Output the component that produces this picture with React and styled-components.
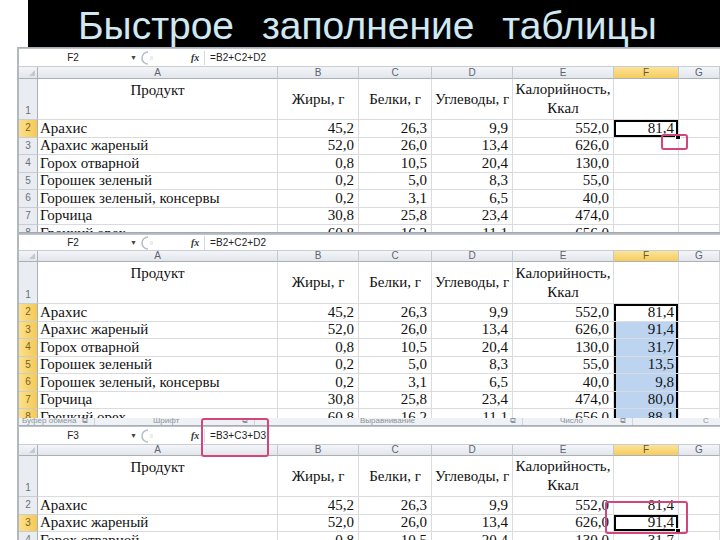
import React from 'react';
import styled, { createGlobalStyle, css } from 'styled-components';

const Global = createGlobalStyle`
  html, body { margin: 0; padding: 0; background: #fff; }
  body { width: 720px; height: 540px; overflow: hidden; font-family: "Liberation Sans", Arial, sans-serif; }
  * { box-sizing: border-box; }
`;

const Slide = styled.div`
  width: 720px;
  height: 540px;
  display: flex;
  flex-direction: column;
  background: #fff;
  overflow: hidden;
`;

const TitleBar = styled.header`
  height: 47px;
  margin-left: 28px;
  background: #000;
  display: flex;
  align-items: center;
  padding-left: 50px;
  flex-shrink: 0;
`;

const Title = styled.h1`
  margin: 0;
  padding-top: 3px;
  font: 400 39px/1 "Liberation Sans", Arial, sans-serif;
  color: #cfe8f2;
  word-spacing: 17px;
  white-space: nowrap;
`;

const Stack = styled.div`
  display: flex;
  flex-direction: column;
  margin-left: 17px;
`;

const Panel = styled.section`
  position: relative;
  height: ${p => p.$h}px;
  overflow: hidden;
  border-left: 2px solid #b3b8bf;
  background: #fff;
  flex-shrink: 0;
`;

const RibbonLabels = styled.div`
  height: 7px;
  display: flex;
  align-items: flex-end;
  overflow: hidden;
  background: #eef1f5;
  color: #8d939b;
  font: 8px/9px "Liberation Sans", Arial, sans-serif;
`;

const RibbonGroup = styled.div`
  width: ${p => p.$w}px;
  flex-shrink: 0;
  display: flex;
  justify-content: space-between;
  gap: 4px;
  padding: 0 6px 0 ${p => p.$pad}px;
  border-right: 1px solid #cfd4da;
  white-space: nowrap;
`;

const FrameLine = styled.div`
  height: ${p => p.$h}px;
  background: linear-gradient(#9da3ab, #c8cdd3);
  flex-shrink: 0;
`;

const FormulaBar = styled.div`
  height: ${p => p.$h}px;
  display: flex;
  align-items: center;
  background: #fff;
  font: 10px/1 "Liberation Sans", Arial, sans-serif;
  color: #222;
  border-bottom: 1px solid #c9ced4;
`;

const NameBox = styled.div`
  width: 108px;
  text-align: center;
`;

const DropArrow = styled.span`
  margin-left: 3px;
  width: 9px;
  font-size: 7px;
  color: #444;
`;

const RoundBtn = styled.span`
  margin-left: 2px;
  width: 16px;
  height: 14px;
  display: flex;
  align-items: center;
`;

const Fx = styled.span`
  margin-left: 34px;
  width: 10px;
  font: italic bold 10px/1 "Liberation Serif", serif;
  color: #333;
`;

const FormulaText = styled.div`
  margin-left: 3px;
  padding-left: 5px;
  border-left: 1px solid #d5d9de;
  height: 14px;
  display: flex;
  align-items: center;
  letter-spacing: 0.1px;
`;

const Sheet = styled.div`
  display: grid;
  grid-template-columns: 19px 240px 81px 73px 81px 101px 65px 1fr;
  grid-template-rows: ${p => p.$hdr}px ${p => p.$row1}px;
  grid-auto-rows: 17.5px;
`;

const HeadBase = css`
  font: 10px/1 "Liberation Sans", Arial, sans-serif;
  color: #5d6470;
  display: flex;
  justify-content: center;
  overflow: hidden;
`;

const Corner = styled.div`
  ${HeadBase};
  background: linear-gradient(#f3f5f8, #e2e6eb);
  border-right: 1px solid #a9b0b9;
  border-bottom: 1px solid #a9b0b9;
  align-items: flex-end;
  justify-content: flex-end;
  padding: 0 2px 2px 0;
`;

const ColHead = styled.div`
  ${HeadBase};
  align-items: center;
  background: ${p => (p.$sel ? 'linear-gradient(#fbe39a, #f6cd5c)' : 'linear-gradient(#f3f5f8, #e2e6eb)')};
  border-right: 1px solid #c3c9d0;
  border-bottom: 1px solid #a9b0b9;
  color: ${p => (p.$sel ? '#6a5a2a' : '#5d6470')};
`;

const RowHead = styled.div`
  ${HeadBase};
  align-items: ${p => (p.$bottom ? 'flex-end' : 'center')};
  padding-bottom: ${p => (p.$bottom ? '3px' : '0')};
  background: ${p => (p.$sel ? 'linear-gradient(90deg, #fbe08c, #f5c954)' : '#e9ecf0')};
  border-right: 1px solid #a9b0b9;
  border-bottom: 1px solid #c8cdd4;
  color: ${p => (p.$sel ? '#7a6028' : '#6a7079')};
`;

const selShadow = p => {
  if (!p.$sel) return 'none';
  const parts = ['inset 2px 0 0 #000', 'inset -2px 0 0 #000'];
  if (p.$sel.top) parts.push('inset 0 2px 0 #000');
  if (p.$sel.bottom) parts.push('inset 0 -2px 0 #000');
  return parts.join(', ');
};

const Cell = styled.div`
  position: relative;
  display: flex;
  align-items: ${p => p.$valign || 'center'};
  justify-content: ${p => p.$align || 'flex-start'};
  text-align: center;
  padding: ${p => (p.$align === 'flex-end' ? '0 4px 0 2px' : '0 2px')};
  font: 15px/19px "Liberation Serif", "Times New Roman", serif;
  color: #111;
  white-space: nowrap;
  background: ${p => (p.$fill ? '#bcd4f0' : '#fff')};
  border-right: 1px solid #d9dbde;
  border-bottom: 1px solid #d9dbde;
  box-shadow: ${selShadow};
`;

const TopText = styled.span`
  padding-top: 2px;
`;

const FillHandle = styled.span`
  position: absolute;
  right: -3px;
  bottom: -3px;
  width: 6px;
  height: 6px;
  background: #000;
  border: 1px solid #fff;
  z-index: 3;
`;

const Annot = styled.div`
  position: absolute;
  left: ${p => p.$x}px;
  top: ${p => p.$y}px;
  width: ${p => p.$w}px;
  height: ${p => p.$h}px;
  border: 2px solid #d2467b;
  border-radius: 3px;
  z-index: 5;
  pointer-events: none;
`;

const DATA = [
  ['Арахис', '45,2', '26,3', '9,9', '552,0', '81,4'],
  ['Арахис жареный', '52,0', '26,0', '13,4', '626,0', '91,4'],
  ['Горох отварной', '0,8', '10,5', '20,4', '130,0', '31,7'],
  ['Горошек зеленый', '0,2', '5,0', '8,3', '55,0', '13,5'],
  ['Горошек зеленый, консервы', '0,2', '3,1', '6,5', '40,0', '9,8'],
  ['Горчица', '30,8', '25,8', '23,4', '474,0', '80,0'],
  ['Грецкий орех', '60,8', '16,2', '11,1', '656,0', '88,1'],
];

const LETTERS = ['A', 'B', 'C', 'D', 'E', 'F', 'G'];

function CornerMark() {
  return (
    <svg width="6" height="6" viewBox="0 0 6 6">
      <path d="M6 0 L6 6 L0 6 Z" fill="#c4c9cf" />
    </svg>
  );
}

function RoundGlyph() {
  return (
    <svg width="16" height="14" viewBox="0 0 16 14">
      <path d="M7 1 A6 6 0 0 0 7 13" fill="none" stroke="#b9bfc7" strokeWidth="1.6" />
      <path d="M9 6 H12 M9 8 H12" stroke="#cdd1d6" strokeWidth="0.8" />
    </svg>
  );
}

function SheetPanel({ cfg }) {
  const { h, strip, topH, fbH, hdrH, row1H, name, formula, sel, blue, filled, handleRow, annots } = cfg;
  return (
    <Panel $h={h}>
      {strip && (
        <RibbonLabels>
          <RibbonGroup $w={76} $pad={3}><span>Буфер обмена</span><span>⧉</span></RibbonGroup>
          <RibbonGroup $w={160} $pad={58}><span>Шрифт</span><span>⧉</span></RibbonGroup>
          <RibbonGroup $w={268} $pad={105}><span>Выравнивание</span><span>⧉</span></RibbonGroup>
          <RibbonGroup $w={110} $pad={37}><span>Число</span><span>⧉</span></RibbonGroup>
          <RibbonGroup $w={90} $pad={70}><span>С</span></RibbonGroup>
        </RibbonLabels>
      )}
      <FrameLine $h={topH} />
      <FormulaBar $h={fbH}>
        <NameBox>{name}</NameBox>
        <DropArrow>▼</DropArrow>
        <RoundBtn><RoundGlyph /></RoundBtn>
        <Fx>fx</Fx>
        <FormulaText>{formula}</FormulaText>
      </FormulaBar>
      <Sheet $hdr={hdrH} $row1={row1H}>
        <Corner><CornerMark /></Corner>
        {LETTERS.map(l => (
          <ColHead key={l} $sel={l === 'F'}>{l}</ColHead>
        ))}
        <RowHead $bottom>1</RowHead>
        <Cell $valign="flex-start" $align="center"><TopText>Продукт</TopText></Cell>
        <Cell $align="center">Жиры, г</Cell>
        <Cell $align="center">Белки, г</Cell>
        <Cell $align="center">Углеводы, г</Cell>
        <Cell $align="center">Калорийность,<br />Ккал</Cell>
        <Cell />
        <Cell />
        {DATA.map((r, i) => {
          const rowNo = i + 2;
          const inSel = rowNo >= sel[0] && rowNo <= sel[1];
          const fSel = inSel ? { top: rowNo === sel[0], bottom: rowNo === sel[1] } : null;
          return (
            <React.Fragment key={rowNo}>
              <RowHead $sel={inSel}>{rowNo}</RowHead>
              <Cell>{r[0]}</Cell>
              <Cell $align="flex-end">{r[1]}</Cell>
              <Cell $align="flex-end">{r[2]}</Cell>
              <Cell $align="flex-end">{r[3]}</Cell>
              <Cell $align="flex-end">{r[4]}</Cell>
              <Cell $align="flex-end" $sel={fSel} $fill={blue && rowNo >= blue[0] && rowNo <= blue[1]}>
                {rowNo - 1 <= filled ? r[5] : ''}
                {handleRow === rowNo && <FillHandle />}
              </Cell>
              <Cell />
            </React.Fragment>
          );
        })}
      </Sheet>
      {annots.map((a, i) => (
        <Annot key={i} $x={a[0]} $y={a[1]} $w={a[2]} $h={a[3]} />
      ))}
    </Panel>
  );
}

const PANELS = [
  {
    h: 185, strip: false, topH: 2, fbH: 18, hdrH: 12, row1H: 41,
    name: 'F2', formula: '=B2+C2+D2', sel: [2, 2], blue: null, filled: 1, handleRow: 2,
    annots: [[642, 87, 27, 16]],
  },
  {
    h: 186, strip: false, topH: 3, fbH: 16, hdrH: 11, row1H: 42,
    name: 'F2', formula: '=B2+C2+D2', sel: [2, 8], blue: [3, 8], filled: 7, handleRow: null,
    annots: [],
  },
  {
    h: 122, strip: true, topH: 2, fbH: 18, hdrH: 11, row1H: 41,
    name: 'F3', formula: '=B3+C3+D3', sel: [3, 3], blue: null, filled: 7, handleRow: 3,
    annots: [[182, 0, 68, 39], [586, 83, 83, 33]],
  },
];

export default function App() {
  return (
    <Slide>
      <Global />
      <TitleBar>
        <Title>Быстрое заполнение таблицы</Title>
      </TitleBar>
      <Stack>
        {PANELS.map((p, i) => (
          <SheetPanel key={i} cfg={p} />
        ))}
      </Stack>
    </Slide>
  );
}
